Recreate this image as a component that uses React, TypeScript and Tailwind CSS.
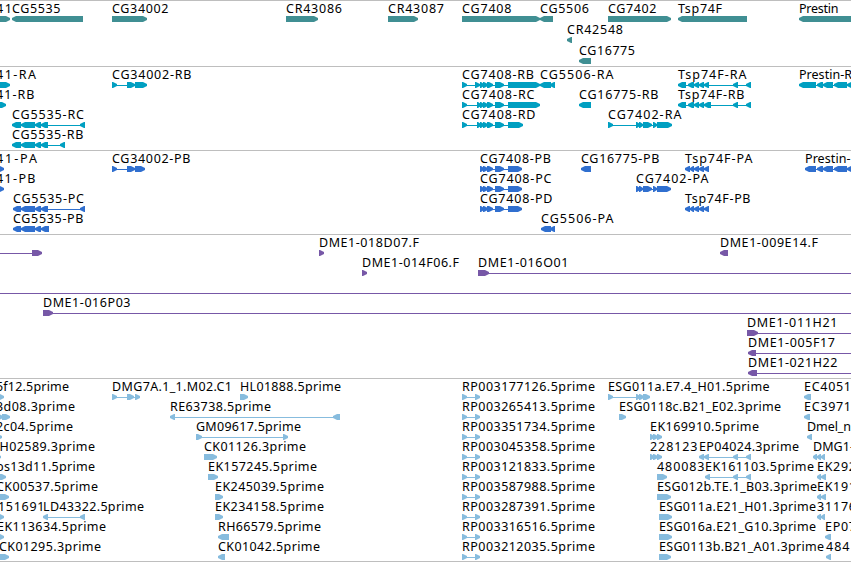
type Dir = "L" | "R";
type Block = [number, number];

interface Feature {
  row: number;
  dir: Dir;
  blocks: Block[];
  // label text, left edge and right edge
  label?: [string, number, number];
  // extent of the connecting line when it runs past the blocks
  line?: [number, number];
}

interface Track {
  name: string;
  frame: string;
  fill: string;
  pitch: number;
  height: number;
  features: Feature[];
}

const f = (
  row: number,
  dir: Dir,
  blocks: Block[],
  label?: [string, number, number],
  line?: [number, number],
): Feature => ({ row, dir, blocks, label, line });

const cg5535: Block[] = [[21, 35], [35, 41]];
const prestin: Block[] = [[817, 823], [823, 833], [834, 847], [847, 858]];
const cg7408: Block[] = [[480, 484], [483, 488], [487, 493], [495, 504]];
const cg7402: Block[] = [[636, 640], [639, 643], [643, 652], [653, 657]];
const tsp: Block[] = [[690, 694], [694, 699], [699, 704]];

const genes: Feature[] = [
  f(0, "R", [[-20, 10]], ["41", -4, 12]),
  f(0, "L", [[12, 83]], ["CG5535", 12, 60.5]),
  f(0, "R", [[112, 147]], ["CG34002", 112, 168.5]),
  f(0, "R", [[286, 318]], ["CR43086", 286, 342]),
  f(0, "R", [[388, 418]], ["CR43087", 388, 444]),
  f(0, "R", [[462, 540]], ["CG7408", 462, 511.5]),
  f(0, "L", [[540, 553]], ["CG5506", 540, 589]),
  f(1, "L", [[567, 572]], ["CR42548", 567, 623]),
  f(2, "L", [[579, 591]], ["CG16775", 579, 635]),
  f(0, "R", [[608, 671]], ["CG7402", 608, 656.5]),
  f(0, "L", [[678, 747]], ["Tsp74F", 678, 722]),
  f(0, "L", [[799, 870]], ["Prestin", 799, 838.5]),
];

const transcripts: Feature[] = [
  f(0, "R", [[-10, 10]], ["41-RA", -4, 36]),
  f(1, "R", [[-10, 6]], ["41-RB", -4, 34.5]),
  f(2, "L", [[12, 21], ...cg5535, [41, 48], [80, 85]], ["CG5535-RC", 12, 84]),
  f(3, "L", [[12, 21], ...cg5535, [41, 48], [60, 65]], ["CG5535-RB", 12, 83.5]),
  f(0, "R", [[112, 117], [127, 135], [135, 147]], ["CG34002-RB", 112, 191.5]),
  f(0, "R", [[462, 467], [475, 480], ...cg7408, [508, 540]], ["CG7408-RB", 462, 534]),
  f(1, "R", [[462, 467], [477, 481], ...cg7408, [508, 540]], ["CG7408-RC", 462, 534.5]),
  f(2, "R", [[462, 467], [477, 481], ...cg7408, [508, 523]], ["CG7408-RD", 462, 535.5]),
  f(0, "L", [[540, 551], [550, 555]], ["CG5506-RA", 540, 613.5]),
  f(1, "L", [[579, 591]], ["CG16775-RB", 579, 658.5]),
  f(2, "R", [[608, 613], ...cg7402, [657, 672]], ["CG7402-RA", 608, 681.5]),
  f(0, "L", [[678, 686], [688, 694], ...tsp.slice(1), [704, 709], [733, 738], [746, 751]], ["Tsp74F-RA", 678, 746.5]),
  f(1, "L", [[678, 686], [688, 694], ...tsp.slice(1), [704, 711], [733, 738], [746, 751]], ["Tsp74F-RB", 678, 744.5]),
  f(0, "L", [[799, 816], ...prestin], ["Prestin-R", 799, 852]),
];

const proteins: Feature[] = [
  f(0, "R", [[-10, 4]], ["41-PA", -4, 37]),
  f(1, "R", [[-10, 4]], ["41-PB", -4, 35.5]),
  f(2, "L", [[13, 21], ...cg5535, [41, 48], [80, 85]], ["CG5535-PC", 13, 84]),
  f(3, "L", [[13, 21], ...cg5535, [41, 49]], ["CG5535-PB", 13, 83.5]),
  f(0, "R", [[112, 117], [127, 135], [135, 145]], ["CG34002-PB", 112, 190.5]),
  f(0, "R", [...cg7408, [508, 522]], ["CG7408-PB", 480, 551]),
  f(1, "R", [...cg7408, [508, 522]], ["CG7408-PC", 480, 551.5]),
  f(2, "R", [...cg7408, [508, 522]], ["CG7408-PD", 480, 552.5]),
  f(3, "L", [[541, 551], [550, 555]], ["CG5506-PA", 541, 613.5]),
  f(0, "L", [[581, 591]], ["CG16775-PB", 581, 659.5]),
  f(1, "R", [...cg7402, [657, 671]], ["CG7402-PA", 636, 708.5]),
  f(0, "L", [[685, 690], ...tsp, [704, 709]], ["Tsp74F-PA", 685, 752.5]),
  f(2, "L", [[685, 690], ...tsp, [704, 709]], ["Tsp74F-PB", 685, 750.5]),
  f(0, "L", [[805, 816], ...prestin], ["Prestin-", 805, 850.5]),
];

const clones: Feature[] = [
  f(0, "R", [[32, 42]], undefined, [0, 40]),
  f(0, "R", [[319, 324]], ["DME1-018D07.F", 319, 419]),
  f(0, "L", [[720, 728]], ["DME1-009E14.F", 720, 818]),
  f(1, "R", [[362, 367]], ["DME1-014F06.F", 362, 459]),
  f(1, "R", [[478, 489]], ["DME1-016O01", 478, 568.5]),
  f(1, "R", [], undefined, [486, 851]),
  f(2, "R", [], undefined, [0, 851]),
  f(3, "R", [[43, 53]], ["DME1-016P03", 43, 130.5], [50, 851]),
  f(4, "R", [[747, 758]], ["DME1-011H21", 747, 837.5], [755, 851]),
  f(5, "L", [[748, 756]], ["DME1-005F17", 748, 835]),
  f(5, "L", [], undefined, [756, 851]),
  f(6, "L", [[748, 757]], ["DME1-021H22", 748, 837.5], [757, 851]),
];

const rpReads = [
  "RP003177126.5prime",
  "RP003265413.5prime",
  "RP003351734.5prime",
  "RP003045358.5prime",
  "RP003121833.5prime",
  "RP003587988.5prime",
  "RP003287391.5prime",
  "RP003316516.5prime",
  "RP003212035.5prime",
];

const ests: Feature[] = [
  f(0, "R", [[-8, 4]], ["5f12.5prime", -4, 69]),
  f(1, "R", [[-8, 3], [2, 10]], ["3d08.3prime", -4, 75]),
  f(2, "R", [[-8, 2]], ["2c04.5prime", -4, 73]),
  f(3, "R", [[-8, 1]], ["H02589.3prime", -0.5, 95]),
  f(4, "R", [[-8, 6]], ["bs13d11.5prime", -4, 95]),
  f(5, "R", [[-8, 9]], ["CK00537.5prime", -4, 98]),
  f(6, "R", [[-8, 4]], ["151691", -2, 44.5]),
  f(6, "L", [[43, 48], [80, 85]], ["LD43322.5prime", 43, 144]),
  f(7, "R", [[-8, 4]], ["EK113634.5prime", -3, 106]),
  f(8, "R", [[-8, 9]], ["CK01295.3prime", -1, 101]),

  f(0, "R", [[112, 117], [127, 134], [135, 140]], ["DMG7A.1_1.M02.C1", 112, 232]),
  f(0, "R", [[240, 248]], ["HL01888.5prime", 240, 341]),
  f(1, "L", [[170, 175], [333, 340]], ["RE63738.5prime", 170, 271]),
  f(2, "R", [[196, 202], [283, 288]], ["GM09617.5prime", 196, 301]),
  f(3, "R", [[204, 217]], ["CK01126.3prime", 204, 306]),
  f(4, "R", [[208, 218]], ["EK157245.5prime", 208, 317]),
  f(5, "R", [[215, 223]], ["EK245039.5prime", 215, 324]),
  f(6, "R", [[215, 223]], ["EK234158.5prime", 215, 324]),
  f(7, "L", [[218, 229]], ["RH66579.5prime", 218, 321]),
  f(8, "L", [[218, 225]], ["CK01042.5prime", 218, 320]),

  ...rpReads.map((name, row) => f(row, "R", [[462, 467], [475, 480]], [name, 462, 595])),

  f(0, "R", [[608, 613], [636, 640], [639, 644], [643, 650]], ["ESG011a.E7.4_H01.5prime", 608, 769.5]),
  f(1, "R", [[619, 626]], ["ESG0118c.B21_E02.3prime", 619, 781]),
  f(2, "R", [[650, 654], [653, 658], [657, 662]], ["EK169910.5prime", 650, 759]),
  f(3, "R", [[650, 654], [653, 658], [657, 662]], ["228123", 650, 697.5]),
  f(3, "L", [[699, 704], [704, 709], [733, 738], [746, 751]], ["EP04024.3prime", 699, 799]),
  f(4, "R", [[657, 667]], ["480083", 657, 704.5]),
  f(4, "L", [[705, 710], [733, 738], [746, 751]], ["EK161103.5prime", 705, 814]),
  f(5, "R", [[657, 671]], ["ESG012b.TE.1_B03.3prime", 657, 817]),
  f(6, "R", [[659, 672]], ["ESG011a.E21_H01.3prime", 659, 816]),
  f(7, "R", [[659, 672]], ["ESG016a.E21_G10.3prime", 659, 816]),
  f(8, "R", [[659, 671]], ["ESG0113b.B21_A01.3prime", 659, 824]),

  f(0, "L", [[804, 811]], ["EC4051", 804, 851]),
  f(1, "L", [[804, 810]], ["EC3971", 804, 851]),
  f(2, "L", [[807, 812]], ["Dmel_n", 807, 851]),
  f(3, "L", [[813, 817], [817, 821], [821, 825]], ["DMG1-", 813, 854]),
  f(4, "L", [[817, 821], [821, 826]], ["EK292", 817, 856]),
  f(5, "L", [[817, 821], [821, 826]], ["EK191", 817, 856]),
  f(6, "L", [[817, 821], [821, 825]], ["31176", 817, 856]),
  f(7, "L", [[825, 831]], ["EP07", 825, 856]),
  f(8, "L", [[826, 831]], ["484", 826, 849.5]),
];

const tracks: Track[] = [
  { name: "Genes", frame: "h-[66px]", fill: "#408f93", pitch: 21, height: 65, features: genes },
  { name: "Transcripts", frame: "h-[84px]", fill: "#009fc1", pitch: 20, height: 83, features: transcripts },
  { name: "Proteins", frame: "h-[84px]", fill: "#306fcf", pitch: 20, height: 83, features: proteins },
  { name: "Clones", frame: "h-[144px]", fill: "#7758a7", pitch: 20, height: 143, features: clones },
  { name: "ESTs", frame: "h-[183px]", fill: "#87bcde", pitch: 20, height: 182, features: ests },
];

function arrow([a, b]: Block, dir: Dir, top: number) {
  const tip = Math.min(5, b - a) - 1;
  const mid = top + 3;
  const bottom = top + 6;
  return dir === "R"
    ? `${a},${top} ${b - tip},${top} ${b},${mid - 1} ${b},${mid + 1} ${b - tip},${bottom} ${a},${bottom}`
    : `${b},${top} ${a + tip},${top} ${a},${mid - 1} ${a},${mid + 1} ${a + tip},${bottom} ${b},${bottom}`;
}

function FeatureGlyph({ feature, pitch, fill }: { feature: Feature; pitch: number; fill: string }) {
  const { row, dir, blocks, label } = feature;
  const baseline = 12 + row * pitch;
  const top = baseline + 3;
  const line =
    feature.line ??
    (blocks.length > 1 ? [blocks[0][0] + 2, blocks[blocks.length - 1][1] - 2] : undefined);
  return (
    <g>
      {line && (
        <rect
          x={line[0]}
          y={top + 3}
          width={line[1] - line[0]}
          height={1}
          fill={fill}
          shapeRendering="crispEdges"
        />
      )}
      {blocks.map((b, i) => (
        <polygon key={i} points={arrow(b, dir, top)} fill={fill} />
      ))}
      {label && (
        <text x={label[1]} y={baseline} textLength={label[2] - label[1]} fill="#000">
          {label[0]}
        </text>
      )}
    </g>
  );
}

export default function App() {
  return (
    <main className="flex h-[562px] w-[851px] flex-col overflow-hidden bg-white font-['Noto_Sans',sans-serif] text-[12.5px]">
      {tracks.map((track) => (
        <section
          key={track.name}
          aria-label={track.name}
          className={`${track.frame} w-full shrink-0 overflow-hidden border-t border-[#bebebe]`}
        >
          <svg className="block" width={851} height={track.height} viewBox={`0 0 851 ${track.height}`}>
            {track.features.map((feature, i) => (
              <FeatureGlyph key={i} feature={feature} pitch={track.pitch} fill={track.fill} />
            ))}
          </svg>
        </section>
      ))}
      <div className="h-px w-full shrink-0 bg-[#bebebe]" />
    </main>
  );
}
